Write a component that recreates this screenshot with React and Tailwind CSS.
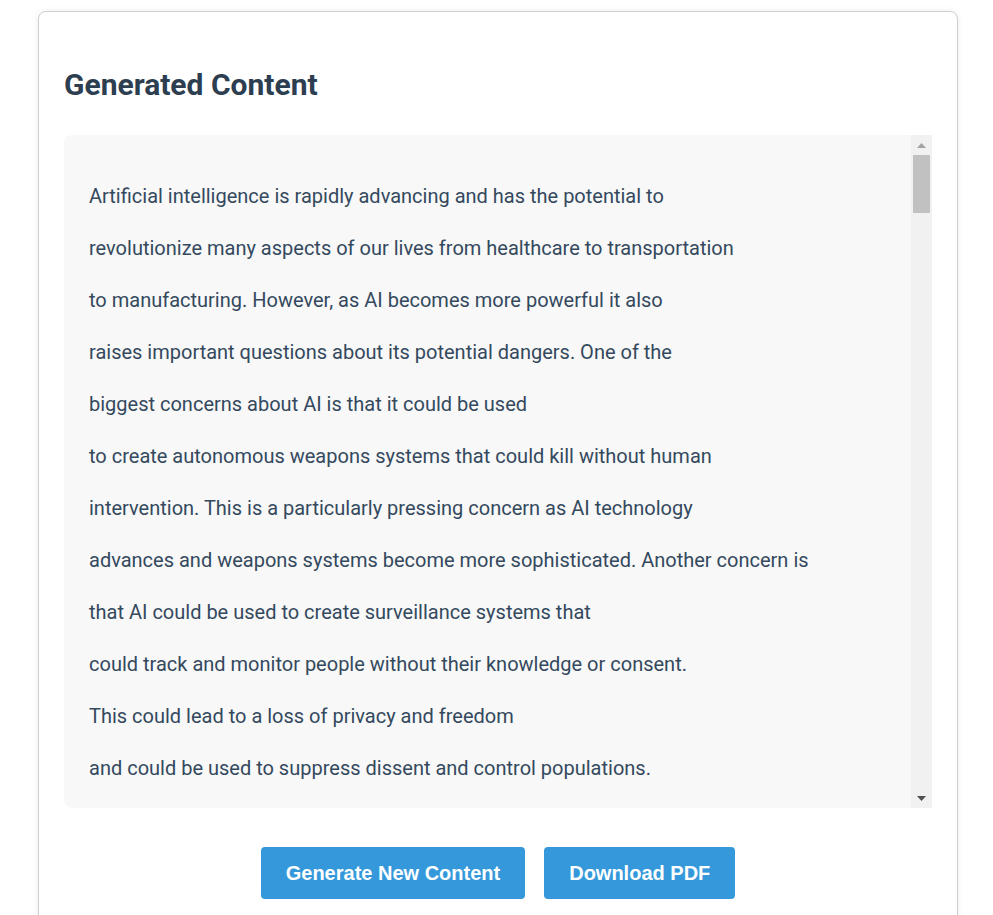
import React from "react";

const visible = [
  "Artificial intelligence is rapidly advancing and has the potential to",
  "revolutionize many aspects of our lives from healthcare to transportation",
  "to manufacturing. However, as AI becomes more powerful it also",
  "raises important questions about its potential dangers. One of the",
  "biggest concerns about AI is that it could be used",
  "to create autonomous weapons systems that could kill without human",
  "intervention. This is a particularly pressing concern as AI technology",
  "advances and weapons systems become more sophisticated. Another concern is",
  "that AI could be used to create surveillance systems that",
  "could track and monitor people without their knowledge or consent.",
  "This could lead to a loss of privacy and freedom",
  "and could be used to suppress dissent and control populations.",
];

const more = [
  "In addition, there are concerns that AI could displace workers",
  "in many industries, leading to widespread unemployment and",
  "economic disruption. As machines become capable of performing",
  "tasks that once required human skill and judgment, many jobs",
  "may disappear faster than new ones can be created.",
  "There are also worries about bias in AI systems. Because these",
  "systems learn from data, they can inherit and amplify the",
  "prejudices that exist in that data, producing unfair outcomes",
  "in areas such as hiring, lending and criminal justice.",
  "Finally, some experts warn that highly capable AI systems could",
  "one day act in ways that their creators did not intend,",
  "pursuing goals that conflict with human values and interests.",
  "To address these risks, researchers, governments and companies",
  "must work together to develop clear rules and safeguards.",
  "This includes investing in research on AI safety, creating",
  "transparent and accountable systems, and ensuring that the",
  "benefits of AI are shared broadly across society.",
  "With careful planning and responsible development, it is possible",
  "to harness the enormous potential of artificial intelligence",
  "while minimizing the dangers that it poses to humanity.",
];

const lines = [...visible];
for (let i = 0; i < 6; i++) lines.push(...more);

export default function App() {
  return (
    <div className="min-h-screen bg-white pt-[11px]">
      <div
        className="ml-[38px] w-[920px] rounded-[8px] border border-[#cfcfcf] bg-white px-[25px] pb-[25px] pt-[55px] shadow-[0_0_6px_rgba(0,0,0,0.08)]"
        style={{ fontFamily: "Roboto, 'Liberation Sans', sans-serif" }}
      >
        <h2 className="text-[30px] font-bold leading-[36px] text-[#2c3e50]">
          Generated Content
        </h2>
        <div className="mt-[32px] flex h-[673px] overflow-hidden rounded-l-[8px] bg-[#f8f8f8]">
          <div className="h-full flex-1 overflow-y-auto pl-[25px] pr-[25px] pt-[35px] pb-[25px] [scrollbar-width:none]">
            {lines.map((l, i) => (
              <div key={i} className="whitespace-nowrap text-[20px] leading-[52px] text-[#34495e]">
                {l}
              </div>
            ))}
          </div>
          <div className="flex h-full w-[21px] flex-col items-center bg-[#f1f1f1]">
            <div className="flex h-[20px] w-full items-center justify-center">
              <svg width="9" height="5" viewBox="0 0 9 5">
                <polygon points="0,5 9,5 4.5,0" fill="#a3a3a3" />
              </svg>
            </div>
            <div className="mx-[2px] h-[58px] w-[17px] bg-[#c1c1c1]" />
            <div className="flex-1" />
            <div className="flex h-[20px] w-full items-center justify-center">
              <svg width="9" height="5" viewBox="0 0 9 5">
                <polygon points="0,0 9,0 4.5,5" fill="#505050" />
              </svg>
            </div>
          </div>
        </div>
        <div className="mt-[39px] flex justify-center gap-[19px]">
          <button
            className="h-[52px] rounded-[4px] bg-[#3498db] px-[25px] text-[20px] font-bold text-white"
            style={{ fontFamily: "'Liberation Sans', Arial, sans-serif" }}
          >
            Generate New Content
          </button>
          <button
            className="h-[52px] rounded-[4px] bg-[#3498db] px-[25px] text-[20px] font-bold text-white"
            style={{ fontFamily: "'Liberation Sans', Arial, sans-serif" }}
          >
            Download PDF
          </button>
        </div>
      </div>
    </div>
  );
}
